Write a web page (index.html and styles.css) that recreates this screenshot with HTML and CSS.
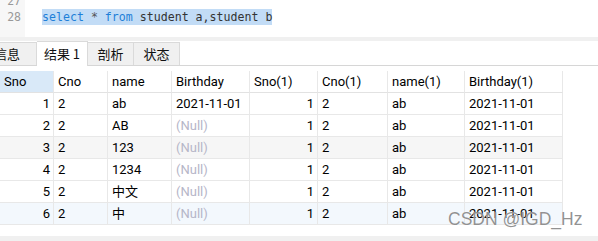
FILE: index.html
```html
<!DOCTYPE html>
<html lang="zh-CN">
<head>
    <meta charset="UTF-8">
    <title>Query Result</title>
    <link rel="stylesheet" href="styles.css">
</head>
<body>
    <div class="window">
        <div class="editor">
            <div class="gutter">
                <div class="line-no">27</div>
                <div class="line-no">28</div>
            </div>
            <div class="code">
                <div class="code-line"></div>
                <div class="code-line"><span class="selected"><span class="kw">select</span> <span class="op">*</span> <span class="kw">from</span> student a,student b</span></div>
            </div>
        </div>

        <div class="splitter"></div>

        <div class="tabs">
            <div class="tab first">信息</div>
            <div class="tab active">结果 1</div>
            <div class="tab">剖析</div>
            <div class="tab">状态</div>
        </div>

        <div class="results">
            <div class="grid">
                <div class="cell head sorted">Sno</div>
                <div class="cell head">Cno</div>
                <div class="cell head">name</div>
                <div class="cell head">Birthday</div>
                <div class="cell head">Sno(1)</div>
                <div class="cell head">Cno(1)</div>
                <div class="cell head">name(1)</div>
                <div class="cell head">Birthday(1)</div>

                <div class="cell num">1</div><div class="cell">2</div><div class="cell">ab</div><div class="cell">2021-11-01</div><div class="cell num">1</div><div class="cell">2</div><div class="cell">ab</div><div class="cell">2021-11-01</div>

                <div class="cell num">2</div><div class="cell">2</div><div class="cell">AB</div><div class="cell null">(Null)</div><div class="cell num">1</div><div class="cell">2</div><div class="cell">ab</div><div class="cell">2021-11-01</div>

                <div class="cell num hover">3</div><div class="cell hover">2</div><div class="cell hover">123</div><div class="cell null hover">(Null)</div><div class="cell num hover">1</div><div class="cell hover">2</div><div class="cell hover">ab</div><div class="cell hover">2021-11-01</div>

                <div class="cell num">4</div><div class="cell">2</div><div class="cell">1234</div><div class="cell null">(Null)</div><div class="cell num">1</div><div class="cell">2</div><div class="cell">ab</div><div class="cell">2021-11-01</div>

                <div class="cell num">5</div><div class="cell">2</div><div class="cell">中文</div><div class="cell null">(Null)</div><div class="cell num">1</div><div class="cell">2</div><div class="cell">ab</div><div class="cell">2021-11-01</div>

                <div class="cell num current">6</div><div class="cell current">2</div><div class="cell current">中</div><div class="cell null current">(Null)</div><div class="cell num current">1</div><div class="cell current">2</div><div class="cell current">ab</div><div class="cell current">2021-11-01</div>
            </div>
        </div>

        <div class="statusbar"></div>

        <div class="watermark">CSDN @IGD_Hz</div>
    </div>
</body>
</html>
```

FILE: styles.css
```css
body {
    margin: 0;
    background: #ffffff;
    font-family: Roboto, "Noto Sans CJK SC", sans-serif;
    font-size: 13px;
    color: #000;
}

.window {
    position: relative;
    width: 598px;
    height: 241px;
    overflow: hidden;
    display: flex;
    flex-direction: column;
}

/* sql editor */
.editor {
    height: 37px;
    display: flex;
    overflow: hidden;
}

.gutter {
    width: 25px;
    background: #f7f7f7;
    margin-top: -7px;
}

.line-no {
    height: 16px;
    line-height: 16px;
    padding-right: 4px;
    text-align: right;
    color: #999;
    font-family: "DejaVu Sans Mono", monospace;
    font-size: 11.5px;
}

.code {
    margin-top: -7px;
    padding-left: 17px;
    font-family: "DejaVu Sans Mono", monospace;
    font-size: 11.6px;
    color: #333;
}

.code-line {
    height: 16px;
    line-height: 16px;
}

.selected {
    background: #c2dcf6;
    padding: 1px 0;
}

.kw {
    color: #1e7fd8;
}

.op {
    color: #555;
}

.splitter {
    height: 4px;
    background: #f0f0f0;
}

/* result tabs */
.tabs {
    height: 24px;
    display: flex;
    align-items: flex-end;
    border-bottom: 1px solid #d6d6d6;
    font-family: "Noto Sans CJK SC", sans-serif;
    font-size: 13px;
}

.tab {
    flex: none;
    height: 23px;
    line-height: 22px;
    width: 46px;
    text-align: center;
    white-space: nowrap;
    background: #f0f0f0;
    border: 1px solid #dadada;
    border-bottom: none;
    border-left: none;
    box-sizing: border-box;
    color: #111;
}

.tab.first {
    margin-left: -20px;
    width: 57px;
    text-align: right;
    padding-right: 16px;
}

.tab.active {
    height: 25px;
    width: 51px;
    margin-bottom: -1px;
    line-height: 24px;
    background: #fff;
}

/* data grid */
.results {
    flex: 1;
    padding-top: 5px;
}

.grid {
    display: grid;
    grid-template-columns: 54px 54px 64px 78px 68px 70px 77px 98px;
    grid-auto-rows: 22px;
}

.cell {
    box-sizing: border-box;
    border-right: 1px solid #e8e8e8;
    border-bottom: 1px solid #e8e8e8;
    padding: 0 4px;
    line-height: 21px;
    white-space: nowrap;
    overflow: hidden;
    font-family: Roboto, "Noto Sans CJK SC", sans-serif;
}

.head {
    border-bottom-color: #e2e2e2;
}

.head.sorted {
    background: #d9e9f8;
}

.num {
    text-align: right;
    padding-right: 3px;
}

.null {
    color: #b6b6c8;
}

.hover {
    background: #f6f6f6;
}

.current {
    background: #f3f8fd;
}

.statusbar {
    height: 5px;
    background: #f0f0f0;
}

.watermark {
    position: absolute;
    left: 448px;
    top: 209px;
    font-family: "Liberation Sans", Arial, sans-serif;
    font-size: 17.5px;
    color: rgba(110, 110, 110, 0.75);
    text-shadow: 0 0 1px #fff;
}
```
